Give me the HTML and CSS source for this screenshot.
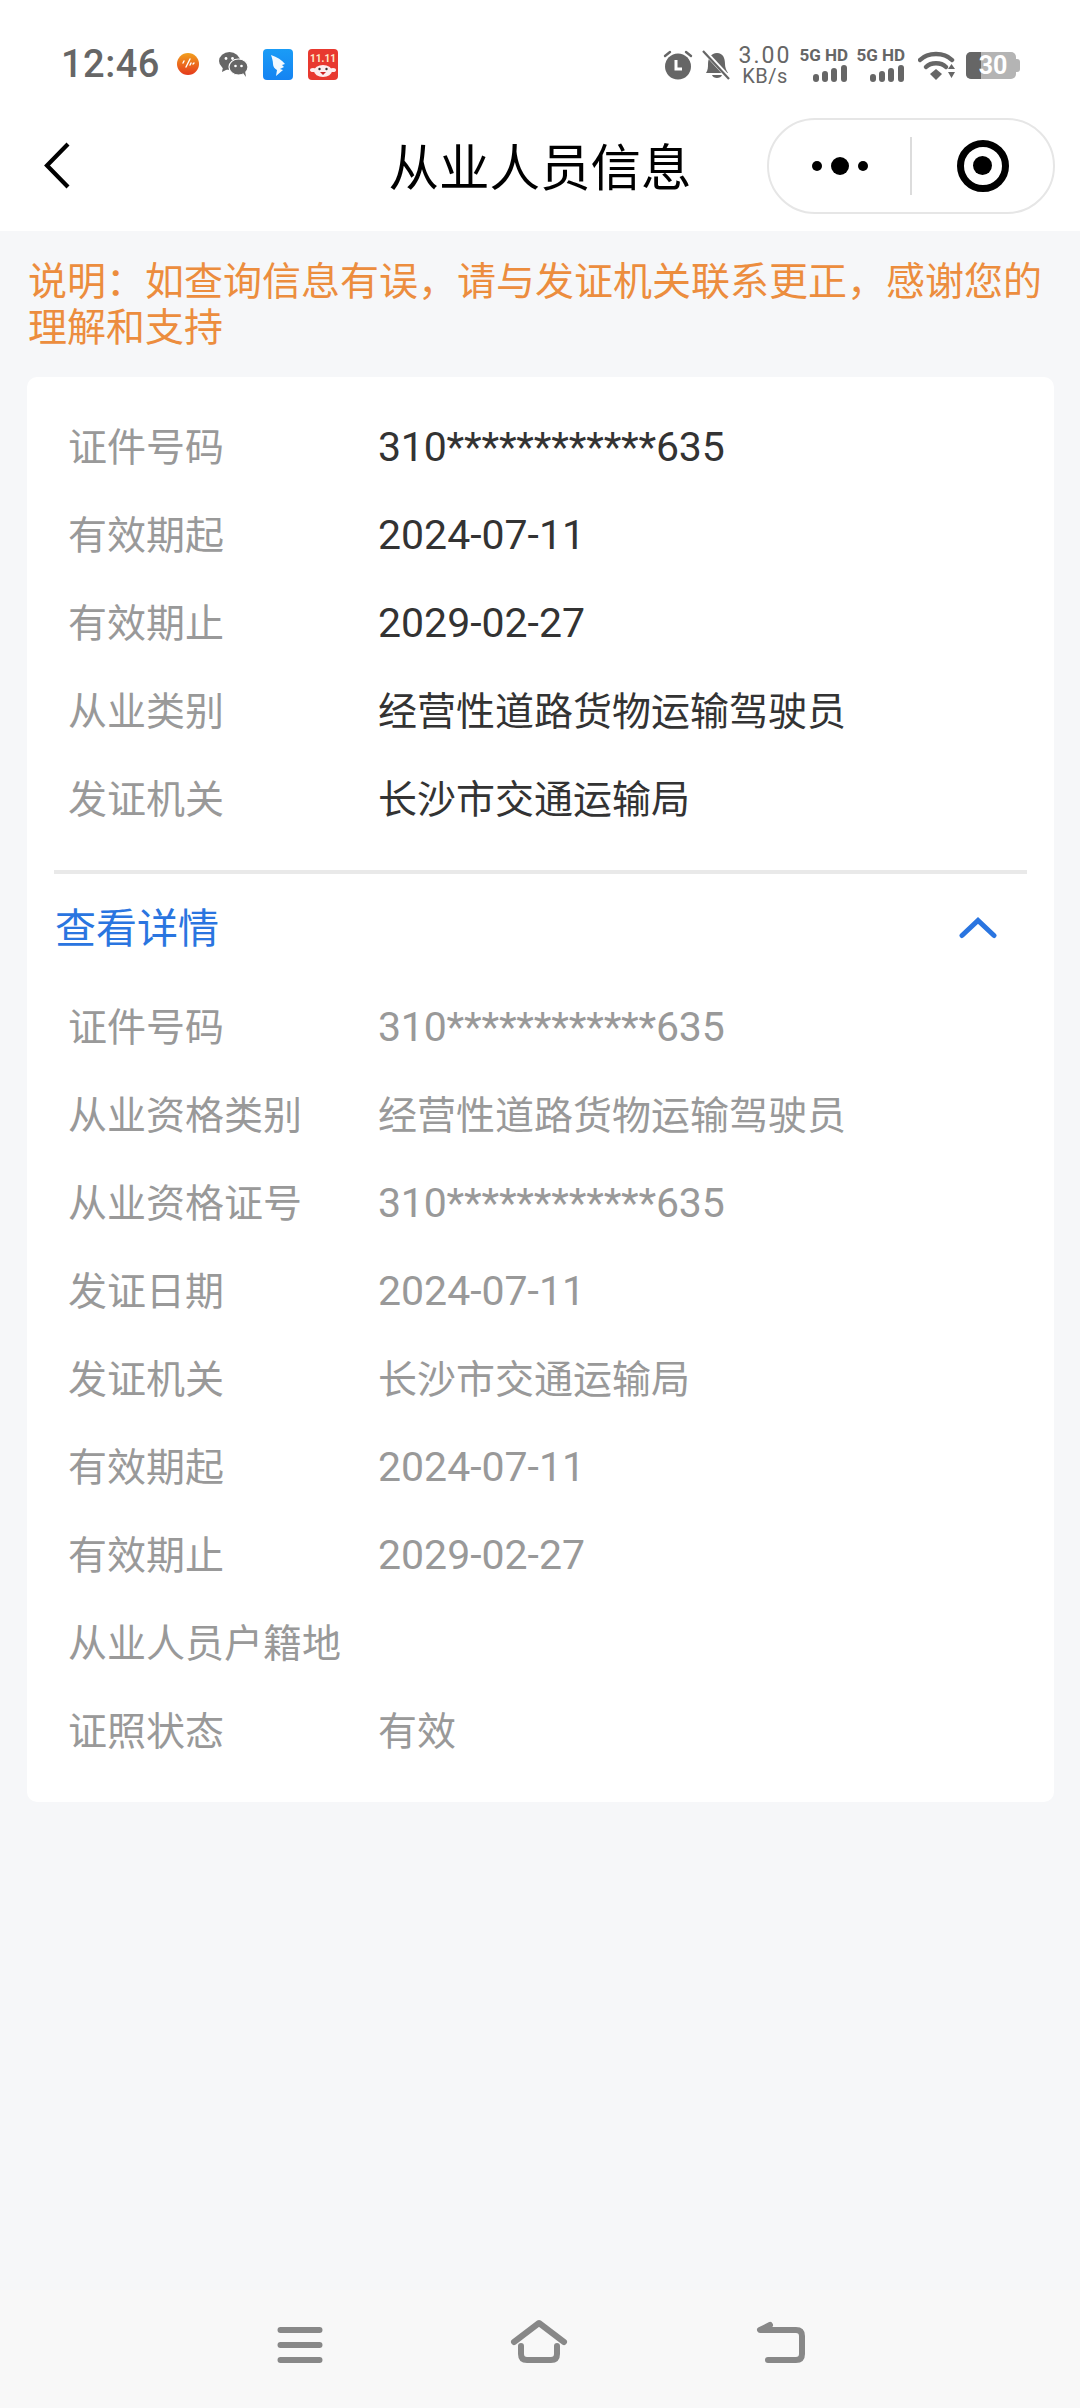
FILE: index.html
```html
<!DOCTYPE html>
<html lang="zh-CN">
<head>
  <meta charset="UTF-8">
  <title>从业人员信息</title>
  <link rel="stylesheet" href="styles.css">
</head>
<body>

<div class="page">
  <div class="top-area">
    <div class="status-bar">
      <div class="status-left">
        <span class="time">12:46</span>
        <svg class="icon-music" width="24" height="24" viewBox="0 0 24 24">
          <defs>
            <linearGradient id="musicFill" x1="0" y1="0" x2="0" y2="1">
              <stop offset="0" stop-color="#f2a01e"/>
              <stop offset="1" stop-color="#e5391c"/>
            </linearGradient>
          </defs>
          <circle cx="12" cy="12" r="11" fill="url(#musicFill)"/>
          <path d="M7 11l1-2M10 15l4-8M14 13l1-2M17 12l1-1" stroke="#fff" stroke-width="1.400" stroke-linecap="round"/>
        </svg>
        <svg class="icon-wechat" width="29" height="25" viewBox="0 0 29 25">
          <ellipse cx="10.500" cy="9" rx="10.500" ry="9" fill="#666"/>
          <path d="M4 15l-1 5 6-3z" fill="#666"/>
          <ellipse cx="19.500" cy="15" rx="9.500" ry="8" fill="#666" stroke="#fff" stroke-width="1.200"/>
          <path d="M24 21l3 4-1-6z" fill="#666"/>
          <circle cx="7" cy="6.500" r="1.400" fill="#fff"/>
          <circle cx="13.500" cy="6.500" r="1.400" fill="#fff"/>
          <circle cx="16.500" cy="14" r="1.300" fill="#fff"/>
          <circle cx="22.500" cy="14" r="1.300" fill="#fff"/>
        </svg>
        <svg class="icon-ding" width="30" height="31" viewBox="0 0 30 31">
          <defs>
            <linearGradient id="dingFill" x1="0" y1="0" x2="0" y2="1">
              <stop offset="0" stop-color="#1a9cf6"/>
              <stop offset="1" stop-color="#1583f2"/>
            </linearGradient>
          </defs>
          <rect width="30" height="31" rx="4" fill="url(#dingFill)"/>
          <path d="M8 6c6 2 11 5 14 9l-3 1 2 2-4 2 3 1-7 6 1-6c-2-1-4-3-4-6 0-3-1-6-2-9z" fill="#f2f9ff"/>
        </svg>
        <svg class="icon-tmall" width="30" height="31" viewBox="0 0 30 31">
          <rect width="30" height="31" rx="4" fill="#e8392f"/>
          <text x="15" y="13" text-anchor="middle" class="tmall-text">11.11</text>
          <ellipse cx="15" cy="22" rx="9" ry="6" fill="#fdeeee"/>
          <ellipse cx="5" cy="21" rx="3" ry="2" fill="#fdeeee"/>
          <ellipse cx="25" cy="21" rx="3" ry="2" fill="#fdeeee"/>
          <circle cx="11.500" cy="20" r="1.200" fill="#333"/>
          <circle cx="18.500" cy="20" r="1.200" fill="#333"/>
          <path d="M12 23h6l-3 3z" fill="#c22"/>
        </svg>
      </div>

      <div class="status-right">
        <svg class="icon-alarm" width="30" height="30" viewBox="0 0 30 30">
          <circle cx="15" cy="16.500" r="13" fill="#666"/>
          <path d="M2 6l5-4M28 6l-5-4" stroke="#666" stroke-width="2.400" stroke-linecap="round"/>
          <path d="M13 10v9h6" fill="none" stroke="#fff" stroke-width="3"/>
        </svg>
        <svg class="icon-bell" width="28" height="30" viewBox="0 0 28 30">
          <path d="M4 23c2-3 2-6 2-9 0-6 3-11 9-11s8 5 8 11c0 3 1 6 3 9zM10 25h10c-1 4-9 4-10 0z" fill="#666"/>
          <path d="M3 2l25 27" stroke="#fff" stroke-width="4.500"/>
          <path d="M1 1l26 28" stroke="#666" stroke-width="2.200"/>
        </svg>
        <div class="speed">
          <span class="speed-num">3.00</span>
          <span class="speed-unit">KB/s</span>
        </div>
        <div class="signal-group">
          <div class="signal">
            <span class="signal-label">5G HD</span>
            <svg width="36" height="17" viewBox="0 0 36 17">
              <rect x="1" y="9" width="6" height="8" rx="3" fill="#666"/>
              <rect x="10" y="6" width="6" height="11" rx="3" fill="#666"/>
              <rect x="19" y="3" width="6" height="14" rx="3" fill="#666"/>
              <rect x="29" y="0" width="6" height="17" rx="3" fill="#666"/>
            </svg>
          </div>
          <div class="signal">
            <span class="signal-label">5G HD</span>
            <svg width="36" height="17" viewBox="0 0 36 17">
              <rect x="1" y="9" width="6" height="8" rx="3" fill="#666"/>
              <rect x="10" y="6" width="6" height="11" rx="3" fill="#666"/>
              <rect x="19" y="3" width="6" height="14" rx="3" fill="#666"/>
              <rect x="29" y="0" width="6" height="17" rx="3" fill="#666"/>
            </svg>
          </div>
        </div>
        <svg class="icon-wifi" width="38" height="29" viewBox="0 0 38 29">
          <path d="M2 9c8-8 24-8 32 0" fill="none" stroke="#666" stroke-width="4.500" stroke-linecap="round"/>
          <path d="M8 16c5-5 15-5 20 0" fill="none" stroke="#666" stroke-width="4.500" stroke-linecap="round"/>
          <path d="M12 23l6-5 6 5-6 6z" fill="#666"/>
          <path d="M30 18l3.500-5 3.500 5zM30 21h7l-3.500 6z" fill="#666"/>
        </svg>
        <div class="battery">
          <div class="battery-body">
            <div class="battery-level"></div>
            <span class="battery-text">30</span>
          </div>
          <div class="battery-nub"></div>
        </div>
      </div>
    </div>

    <div class="nav-bar">
      <svg class="nav-back" width="26" height="50" viewBox="0 0 26 50">
        <path d="M24 3L3 24.500 24 46" fill="none" stroke="#000" stroke-width="4.200"/>
      </svg>
      <div class="nav-title">从业人员信息</div>
      <div class="capsule">
        <div class="capsule-part">
          <span class="dot"></span>
          <span class="dot dot-big"></span>
          <span class="dot"></span>
        </div>
        <div class="capsule-line"></div>
        <div class="capsule-part">
          <div class="target"><span class="target-core"></span></div>
        </div>
      </div>
    </div>
  </div>

  <div class="content">
    <div class="notice">说明：如查询信息有误，请与发证机关联系更正，感谢您的理解和支持</div>

    <div class="card">
      <div class="row"><span class="label">证件号码</span><span class="value num num-id">310************635</span></div>
      <div class="row"><span class="label">有效期起</span><span class="value num">2024-07-11</span></div>
      <div class="row"><span class="label">有效期止</span><span class="value num">2029-02-27</span></div>
      <div class="row"><span class="label">从业类别</span><span class="value">经营性道路货物运输驾驶员</span></div>
      <div class="row"><span class="label">发证机关</span><span class="value">长沙市交通运输局</span></div>

      <div class="divider"></div>

      <div class="detail-toggle">
        <span>查看详情</span>
        <svg class="toggle-arrow" width="38" height="22" viewBox="0 0 38 22">
          <path d="M3 18.500L19 3.500l16 15" fill="none" stroke="#2a75e0" stroke-width="5" stroke-linecap="round"/>
        </svg>
      </div>

      <div class="details">
        <div class="row"><span class="label">证件号码</span><span class="value num num-id">310************635</span></div>
        <div class="row"><span class="label">从业资格类别</span><span class="value">经营性道路货物运输驾驶员</span></div>
        <div class="row"><span class="label">从业资格证号</span><span class="value num num-id">310************635</span></div>
        <div class="row"><span class="label">发证日期</span><span class="value num">2024-07-11</span></div>
        <div class="row"><span class="label">发证机关</span><span class="value">长沙市交通运输局</span></div>
        <div class="row"><span class="label">有效期起</span><span class="value num">2024-07-11</span></div>
        <div class="row"><span class="label">有效期止</span><span class="value num">2029-02-27</span></div>
        <div class="row"><span class="label">从业人员户籍地</span><span class="value"></span></div>
        <div class="row"><span class="label">证照状态</span><span class="value">有效</span></div>
      </div>
    </div>
  </div>

  <div class="bottom-nav">
    <svg width="46" height="48" viewBox="0 0 46 48">
      <path d="M3.500 11h39M3.500 26h39M3.500 41h39" fill="none" stroke="#888" stroke-width="6" stroke-linecap="round"/>
    </svg>
    <svg width="58" height="48" viewBox="0 0 58 48">
      <path d="M4 23L29 4l25 19" fill="none" stroke="#888" stroke-width="6" stroke-linecap="round" stroke-linejoin="round"/>
      <path d="M11 27v8q0 6 6 6h24q6 0 6-6v-8" fill="none" stroke="#888" stroke-width="6" stroke-linecap="round"/>
    </svg>
    <svg width="50" height="48" viewBox="0 0 50 48">
      <path d="M15 6L5 11h36q6 0 6 6v18q0 6-6 6H13" fill="none" stroke="#888" stroke-width="6" stroke-linecap="round" stroke-linejoin="round"/>
    </svg>
  </div>
</div>

</body>
</html>
```

FILE: styles.css
```css
html, body {
  margin: 0;
  padding: 0;
  background-color: #f6f7f9;
  font-family: Roboto, "Noto Sans CJK SC", sans-serif;
}

.page {
  width: 1080px;
  height: 2408px;
  display: flex;
  flex-direction: column;
  overflow: hidden;
}

.top-area {
  height: 231px;
  background-color: #fff;
  flex-shrink: 0;
}

/* status bar */
.status-bar {
  height: 100px;
  padding: 35px 60px 0 61px;
  box-sizing: border-box;
  display: flex;
  justify-content: space-between;
  align-items: flex-start;
  color: #666;
}

.status-left {
  display: flex;
  align-items: center;
  height: 60px;
  margin-top: -1px;
}

.time {
  font-size: 38px;
  font-weight: 500;
  letter-spacing: 0.5px;
  width: 115px;
}

.icon-music {
  margin-right: 19px;
}

.icon-wechat {
  margin-right: 15px;
}

.icon-ding {
  margin-right: 15px;
}

.tmall-text {
  font-size: 10px;
  font-weight: 700;
  fill: #ffe9c8;
}

.status-right {
  display: flex;
  align-items: center;
  height: 60px;
}

.icon-alarm {
  margin-right: 9px;
}

.icon-bell {
  margin-right: 10px;
}

.speed {
  width: 50px;
  margin-right: 10px;
  display: flex;
  flex-direction: column;
  align-items: center;
  font-family: Roboto, sans-serif;
}

.speed-num {
  font-size: 23px;
  letter-spacing: 2px;
  line-height: 23px;
}

.speed-unit {
  font-size: 20px;
  letter-spacing: 0.5px;
  line-height: 19px;
}

.signal-group {
  display: flex;
  gap: 9px;
  margin-right: 13px;
}

.signal {
  width: 48px;
  display: flex;
  flex-direction: column;
  align-items: flex-end;
}

.signal-label {
  font-size: 17px;
  font-weight: 700;
  line-height: 14px;
  margin-bottom: 3px;
  white-space: nowrap;
}

.icon-wifi {
  margin-right: 10px;
}

.battery {
  display: flex;
  align-items: center;
}

.battery-body {
  position: relative;
  width: 50px;
  height: 27px;
  border-radius: 5px;
  background-color: #b4b4b4;
  overflow: hidden;
  display: flex;
  align-items: center;
  justify-content: center;
}

.battery-level {
  position: absolute;
  left: 0;
  top: 0;
  bottom: 0;
  width: 15px;
  background-color: #666;
}

.battery-text {
  position: relative;
  font-size: 25px;
  font-weight: 700;
  color: #fff;
  margin-left: 4px;
}

.battery-nub {
  width: 4px;
  height: 13px;
  background-color: #b4b4b4;
  border-radius: 0 3px 3px 0;
}

/* title bar */
.nav-bar {
  height: 131px;
  display: grid;
  grid-template-columns: 1fr auto 1fr;
  align-items: center;
  padding: 0 25px;
}

.nav-back {
  margin-left: 19px;
}

.nav-title {
  font-size: 50.5px;
  color: #000;
  line-height: 60px;
  margin-top: 7px;
}

.capsule {
  justify-self: end;
  width: 288px;
  height: 96px;
  box-sizing: border-box;
  border: 2px solid #e6e6e6;
  border-radius: 48px;
  display: flex;
  align-items: center;
}

.capsule-part {
  flex: 1;
  display: flex;
  align-items: center;
  justify-content: center;
  gap: 9px;
}

.capsule-line {
  width: 2px;
  height: 58px;
  background-color: #dcdcdc;
}

.dot {
  width: 10px;
  height: 10px;
  border-radius: 50%;
  background-color: #000;
}

.dot-big {
  width: 18px;
  height: 18px;
}

.target {
  width: 52px;
  height: 52px;
  box-sizing: border-box;
  border: 7px solid #000;
  border-radius: 50%;
  display: flex;
  align-items: center;
  justify-content: center;
}

.target-core {
  width: 19px;
  height: 19px;
  border-radius: 50%;
  background-color: #000;
}

/* main content */
.content {
  flex: 1;
  padding: 28px 26px 0 27px;
}

.notice {
  font-size: 39px;
  line-height: 46px;
  color: #ec8d3e;
  padding-left: 1px;
}

.card {
  margin-top: 26px;
  background-color: #fff;
  border-radius: 10px;
  padding: 23px 27px 30px;
}

.row {
  height: 88px;
  display: flex;
  align-items: center;
  padding-left: 14px;
  font-size: 39px;
}

.label {
  width: 310px;
  flex-shrink: 0;
  color: #999;
  white-space: nowrap;
}

.value {
  color: #333;
  white-space: nowrap;
}

/* latin digits sit a little larger and lower than the hanzi */
.num {
  font-size: 41px;
  margin-top: 5px;
}

.num-id {
  letter-spacing: -0.2px;
}

.divider {
  height: 4px;
  margin-top: 30px;
  background-color: #e9e9e9;
}

.detail-toggle {
  height: 106px;
  box-sizing: border-box;
  padding: 0 27px 4px 1px;
  display: flex;
  align-items: center;
  justify-content: space-between;
  font-size: 41px;
  color: #2a75e0;
}

.toggle-arrow {
  margin: 6px 3px 0 0;
}

.details .value {
  color: #999;
}

/* system buttons */
.bottom-nav {
  height: 118px;
  flex-shrink: 0;
  box-sizing: border-box;
  padding: 29px 275px 0 277px;
  display: flex;
  justify-content: space-between;
  align-items: flex-start;
  background-color: #f8f8f8;
}
```
